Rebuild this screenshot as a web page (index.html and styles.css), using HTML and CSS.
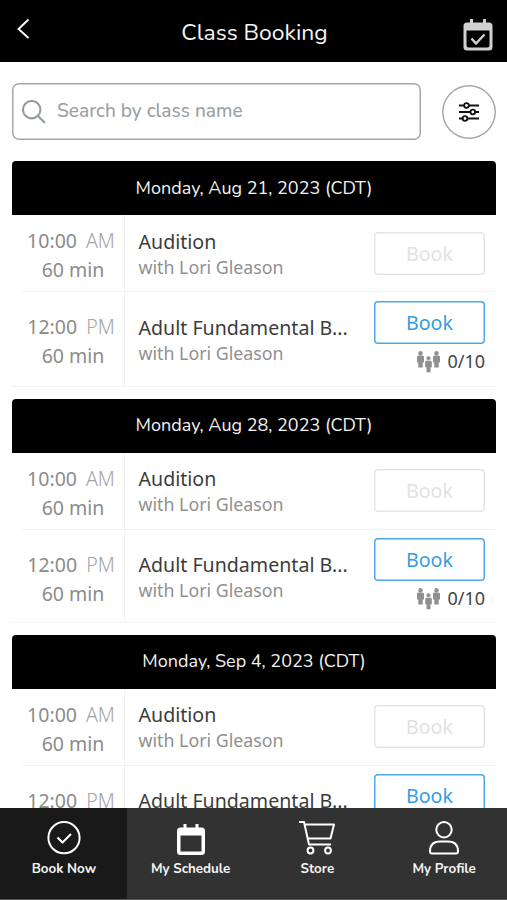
FILE: index.html
```
<!DOCTYPE html>
<html lang="en">
<head>
<meta charset="utf-8">
<title>Class Booking</title>
<link rel="stylesheet" href="styles.css">
</head>
<body>
<div class="app">
  <header class="topbar">
    <svg class="back" width="14" height="22" viewBox="0 0 14 22"><path d="M12.500 1.500 2.500 11l10 9"/></svg>
    <h1 class="title">Class Booking</h1>
    <svg class="topcal" width="30" height="34" viewBox="0 0 30 34"><path class="solid" fill-rule="evenodd" d="M7 1h3v3.500h10V1h3v3.500h3a3.500 3.500 0 0 1 3.500 3.500v21a3.500 3.500 0 0 1-3.500 3.500H4A3.500 3.500 0 0 1 .5 29V8A3.500 3.500 0 0 1 4 4.500h3zM3.500 12.500v15a2 2 0 0 0 2 2h19a2 2 0 0 0 2-2v-15z"/><path class="tick" d="m8.500 20.500 4.500 5 8.500-9"/></svg>
  </header>
  <main class="content">
    <div class="tools">
      <label class="search">
        <svg width="24" height="24" viewBox="0 0 24 24"><circle cx="9.700" cy="9.700" r="8.700"/><path d="m16 16 7 7"/></svg>
        <span class="hint">Search by class name</span>
      </label>
      <button class="filter"><svg width="22" height="22" viewBox="0 0 22 22"><path d="M1 4.500h20M1 11h20M1 17.500h20"/><circle cx="8.500" cy="4.500" r="2.300"/><circle cx="14.800" cy="11" r="2.300"/><circle cx="7" cy="17.500" r="2.300"/></svg></button>
    </div>

    <section class="day first">
      <h2 class="date">Monday, Aug 21, 2023 (CDT)</h2>
      <div class="row">
        <div class="when"><div class="time">10:00 <span class="half">AM</span></div><div class="length">60 min</div></div>
        <div class="what"><div class="name">Audition</div><div class="teacher">with Lori Gleason</div></div>
        <div class="action"><button class="book off">Book</button></div>
      </div>
      <div class="row tall">
        <div class="when"><div class="time">12:00 <span class="half">PM</span></div><div class="length">60 min</div></div>
        <div class="what"><div class="name">Adult Fundamental B...</div><div class="teacher">with Lori Gleason</div></div>
        <div class="action"><button class="book">Book</button><div class="spots"><svg width="23" height="22" viewBox="0 0 23 22"><g id="person"><circle cx="3.500" cy="2.200" r="2.200"/><path d="M1.500 4.600h4q1.500 0 1.500 1.500V11.500H5.700V16.500H1.300V11.500H0V6.100Q0 4.600 1.500 4.600z"/></g><use href="#person" x="16"/><use href="#person" class="front" x="8" y="5"/></svg><span class="count">0/10</span></div></div>
      </div>
    </section>

    <section class="day compact">
      <h2 class="date">Monday, Aug 28, 2023 (CDT)</h2>
      <div class="row">
        <div class="when"><div class="time">10:00 <span class="half">AM</span></div><div class="length">60 min</div></div>
        <div class="what"><div class="name">Audition</div><div class="teacher">with Lori Gleason</div></div>
        <div class="action"><button class="book off">Book</button></div>
      </div>
      <div class="row tall">
        <div class="when"><div class="time">12:00 <span class="half">PM</span></div><div class="length">60 min</div></div>
        <div class="what"><div class="name">Adult Fundamental B...</div><div class="teacher">with Lori Gleason</div></div>
        <div class="action"><button class="book">Book</button><div class="spots"><svg width="23" height="22" viewBox="0 0 23 22"><use href="#person"/><use href="#person" x="16"/><use href="#person" class="front" x="8" y="5"/></svg><span class="count">0/10</span></div></div>
      </div>
    </section>

    <section class="day">
      <h2 class="date">Monday, Sep 4, 2023 (CDT)</h2>
      <div class="row">
        <div class="when"><div class="time">10:00 <span class="half">AM</span></div><div class="length">60 min</div></div>
        <div class="what"><div class="name">Audition</div><div class="teacher">with Lori Gleason</div></div>
        <div class="action"><button class="book off">Book</button></div>
      </div>
      <div class="row tall">
        <div class="when"><div class="time">12:00 <span class="half">PM</span></div></div>
        <div class="what"><div class="name">Adult Fundamental B...</div></div>
        <div class="action"><button class="book">Book</button></div>
      </div>
    </section>
  </main>
  <nav class="tabs">
    <a class="tab active"><svg width="38" height="36" viewBox="0 0 38 36"><circle cx="19" cy="17.700" r="15.600"/><path d="m12.500 17.500 5 5 8.500-8.500"/></svg><span>Book Now</span></a>
    <a class="tab"><svg width="38" height="36" viewBox="0 0 38 36"><path class="solid" fill-rule="evenodd" d="M11.500 4h3V7.500h9V4h3V7.500h3A3.500 3.500 0 0 1 33 11V31.500a3.500 3.500 0 0 1-3.500 3.500h-21A3.500 3.500 0 0 1 5 31.500V11A3.500 3.500 0 0 1 8.500 7.500h3zM8.500 15.500v16h21v-16z"/></svg><span>My Schedule</span></a>
    <a class="tab"><svg width="38" height="36" viewBox="0 0 38 36"><path d="M1 2h5l5 22.500h22M6.800 4.500H36l-3.500 14H10"/><circle cx="12.500" cy="30.500" r="2.900"/><circle cx="30" cy="30.500" r="2.900"/></svg><span>Store</span></a>
    <a class="tab"><svg width="38" height="36" viewBox="0 0 38 36"><circle cx="19" cy="9.700" r="7.700"/><path d="M7 33.500q-2 0-2-2Q5 21.500 15 21.500h8q10 0 10 10 0 2-2 2z"/></svg><span>My Profile</span></a>
  </nav>
</div>
</body>
</html>
```
FILE: styles.css
```
* { box-sizing: border-box; }
body { margin: 0; background: #fff; font-family: "Noto Sans", "Open Sans", sans-serif; }
svg { display: block; flex: none; fill: none; }
button { margin: 0; padding: 0; border: 0; background: none; font: inherit; }
.app { display: flex; flex-direction: column; width: 507px; height: 900px; overflow: hidden; }
.topbar { flex: none; height: 61.500px; background: #000; display: grid; grid-template-columns: 40px 1fr 40px; padding: 0 14px 0 16px; }
.back { margin-top: 18px; stroke: #fff; stroke-width: 1.900; }
.title { margin: 3px 0 0; text-align: center; color: #f4f4f4; font: 400 22.900px/60px Nunito, "Noto Sans", sans-serif; white-space: nowrap; }
.topcal { margin: 18px 0 0 10px; }
.topcal .solid { fill: #d0d0d0; }
.tick { stroke: #d0d0d0; stroke-width: 2.500; }
.content { flex: 1; min-height: 0; overflow: hidden; padding: 21.500px 11px 0 12px; }
.tools { display: flex; justify-content: space-between; align-items: center; height: 57px; margin-bottom: 21.300px; }
.search { width: 409px; height: 57px; box-shadow: inset 0 0 0 1.500px #a2a8ab; border-radius: 7px; display: flex; align-items: center; gap: 11px; padding-left: 10px; }
.search svg { stroke: #939b9f; stroke-width: 2.100; }
.hint { color: #9aa1a5; font: 500 19.100px/26px Nunito, "Noto Sans", sans-serif; white-space: nowrap; margin-top: -2px; }
.filter { width: 54px; height: 54px; box-shadow: inset 0 0 0 1.500px #a9a9ac; border-radius: 50%; display: grid; place-items: center; }
.filter svg { stroke: #111; stroke-width: 1.800; }
.filter circle { fill: #fff; }
.day { height: 226px; margin-bottom: 12px; border-bottom: 1.500px solid #f3f4f4; }
.day.compact { height: 224px; }
.date { margin: 0; height: 53.500px; border-radius: 4px 4px 0 0; background: #000; color: #f2f2f2; text-align: center; font: 400 18px/53px Nunito, "Noto Sans", sans-serif; white-space: nowrap; }
.first .date { line-height: 54.500px; }
.row { display: grid; grid-template-columns: 113px 1fr 122px; height: 76px; }
.row.tall { height: 95px; }
.compact .row.tall { height: 93px; }
.when { border-right: 1px solid #f1f3f3; padding: 11px 0 0 8px; text-align: center; color: #8b8b8b; font-size: 19.500px; line-height: 29.500px; white-space: nowrap; }
.row:not(.tall) > * { box-shadow: 0 1px #f1f3f3; }
.row:not(.tall) > .when { margin-left: 10px; padding-left: 0; }
.row.tall .when { padding: 21px 0 0 10px; }
.time { margin-left: -4px; }
.half { color: #a5a5a5; font-weight: 300; margin-left: 4px; }
.what { padding: 13px 0 0 13.500px; white-space: nowrap; }
.row.tall .what { padding-top: 23px; }
.name { color: #3c3c3c; font-size: 19.600px; line-height: 26px; }
.teacher { color: #909090; font-size: 17.800px; line-height: 25px; }
.action { padding: 16px 11px 0 0; }
.row.tall .action { padding-top: 9px; }
.first .what { padding-top: 14px; }
.first .row.tall .what { padding-top: 24px; }
.first .action { padding-top: 17px; }
.first .row.tall .action { padding-top: 10px; }
.book { display: block; width: 111px; height: 43px; box-shadow: inset 0 0 0 1.500px #4ba8e8; border-radius: 4px; color: #379ce2; font-size: 19.600px; line-height: 43px; }
.book.off { color: #e2e2e2; box-shadow: inset 0 0 0 1.500px #e5e5e5; }
.spots { display: flex; justify-content: flex-end; align-items: center; gap: 8px; height: 34px; }
.spots svg { fill: #8f8f8f; margin: 3px -1px 0 0; }
.spots .front { stroke: #fff; stroke-width: .4; }
.count { font-size: 18px; color: #444; }
.tabs { flex: none; height: 92px; background: #323232; display: grid; grid-template-columns: repeat(4, 1fr); border-bottom: 1px solid #555; }
.tab { display: flex; flex-direction: column; align-items: center; padding: 12px 0 0 1px; color: #f5f5f5; font: 700 13.400px/26px Nunito, "Noto Sans", sans-serif; white-space: nowrap; }
.tab.active { background: #191919; }
.tab svg { stroke: #fff; stroke-width: 2; stroke-linejoin: round; }
.tab svg .solid { fill: #fff; stroke: none; }
```
